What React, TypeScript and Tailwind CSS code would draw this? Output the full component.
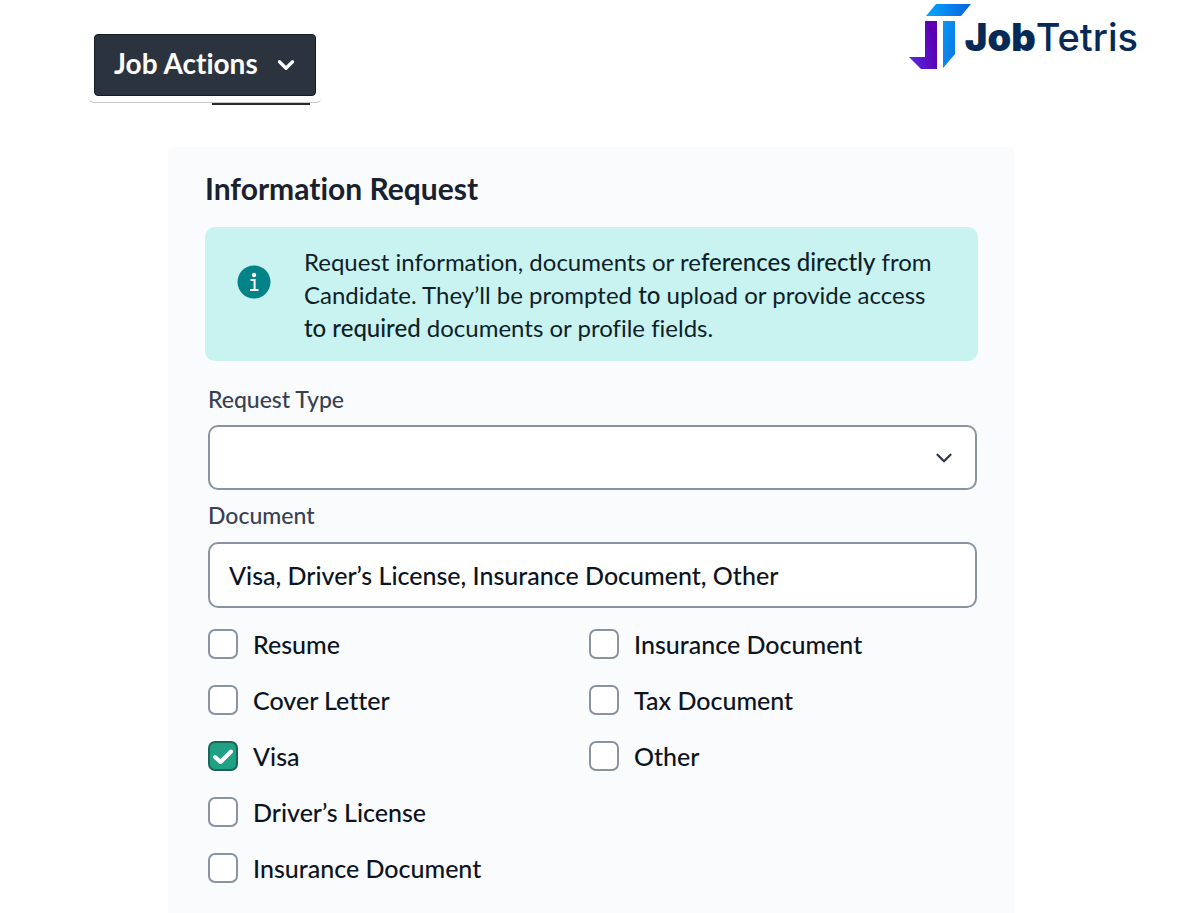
import { useState } from "react";
import { ChevronDown } from "lucide-react";

const leftOptions = [
  { id: "resume", label: "Resume" },
  { id: "cover-letter", label: "Cover Letter" },
  { id: "visa", label: "Visa" },
  { id: "drivers-license", label: "Driver’s License" },
  { id: "insurance", label: "Insurance Document" },
];

const rightOptions = [
  { id: "insurance-2", label: "Insurance Document" },
  { id: "tax", label: "Tax Document" },
  { id: "other", label: "Other" },
];

function Logo() {
  return (
    <a href="#" className="flex items-start" aria-label="JobTetris">
      <svg width="62" height="66" viewBox="0 0 62 66" aria-hidden="true">
        <defs>
          <linearGradient id="top" x1="0" x2="1">
            <stop offset="0" stopColor="#00a8ff" />
            <stop offset="1" stopColor="#0a5fdc" />
          </linearGradient>
          <linearGradient id="stem" x1="0" x2="1" y1="0" y2="1">
            <stop offset="0" stopColor="#0a97f5" />
            <stop offset="1" stopColor="#0a74e4" />
          </linearGradient>
          <linearGradient id="hook" x1="0" x2="1" y1="1" y2="0.6">
            <stop offset="0" stopColor="#5a2be6" />
            <stop offset="1" stopColor="#5a00b0" />
          </linearGradient>
        </defs>
        <path d="M27 0H62L52 12H17Z" fill="url(#top)" />
        <path d="M34 17H46V50L34 64Z" fill="url(#stem)" />
        <path d="M16 17H28V65H12L0 53H16Z" fill="url(#hook)" />
      </svg>
      <span className="mt-3 -ml-[6px] font-['Inter',sans-serif] text-[38px] leading-[42px] font-medium text-[#062a55]">
        <span className="font-black">Job</span>Tetris
      </span>
    </a>
  );
}

function CheckItem({ id, label, checked, onToggle }: any) {
  return (
    <div className="flex h-[30px] items-center gap-[15px]">
      <span className="relative size-[30px] shrink-0">
        <input
          id={id}
          type="checkbox"
          checked={checked}
          onChange={() => onToggle(id)}
          className="block size-[30px] appearance-none rounded-[7px] border-2 border-[#8a93a1] bg-white checked:border-[#1a6558] checked:bg-[#20a085]"
        />
        {checked && (
          <svg
            viewBox="0 0 30 30"
            className="pointer-events-none absolute inset-0 size-[30px]"
            fill="none"
            stroke="white"
            strokeWidth="4"
            strokeLinecap="round"
            strokeLinejoin="round"
          >
            <path d="M7 16L12.5 21L23 10.5" />
          </svg>
        )}
      </span>
      <label htmlFor={id} className="text-[25px] leading-[30px] font-medium text-[#0c1421]">
        {label}
      </label>
    </div>
  );
}

export default function App() {
  const [selected, setSelected] = useState<string[]>(["visa"]);
  const [documents, setDocuments] = useState(
    "Visa, Driver’s License, Insurance Document, Other"
  );

  const toggle = (id: string) => {
    setSelected((prev) =>
      prev.includes(id) ? prev.filter((item) => item !== id) : [...prev, id]
    );
  };

  return (
    <div className="flex min-h-screen flex-col bg-white font-['Lato',sans-serif] [font-variant-ligatures:none]">
      <header className="flex items-start justify-between pt-1 pr-14 pl-[88px]">
        <div className="mt-6">
          <div className="rounded-md border-b border-[#c9c9c9] p-[6px]">
            <button className="flex h-[62px] w-[222px] items-center gap-[15px] rounded-[4px] border border-[#151b24] bg-[#2b333e] pb-1 pl-[19px] text-[28px] font-bold text-white">
              Job Actions
              <ChevronDown size={26} strokeWidth={3} className="mt-1" />
            </button>
          </div>
          <div className="mr-3 ml-[124px] h-[2px] bg-[#2a2a2a]" />
        </div>
        <Logo />
      </header>

      <main className="mt-[42px] mr-[179px] ml-[168px] flex-1 rounded-t-md bg-[#fafbfd] px-[37px] pt-[23px] pb-[30px]">
        <h1 className="text-[30px] leading-9 font-bold text-[#1a212e]">
          Information Request
        </h1>

        <div className="mt-[21px] flex gap-[33px] rounded-[10px] bg-[#c8f3f0] px-8 pt-[18px] pb-[17px]">
          <svg viewBox="0 0 34 34" className="mt-5 size-[34px] shrink-0" aria-hidden="true">
            <circle cx="17" cy="17" r="16.5" fill="#038387" />
            <circle cx="17" cy="10" r="2.2" fill="white" />
            <path
              d="M13.5 15H17.6V24.5M13 25H21.5"
              fill="none"
              stroke="white"
              strokeWidth="2"
            />
          </svg>
          <p className="text-[24px] leading-[33px] text-[#0f1f2a]">
            Request information, documents or re
            <span className="font-medium">ferences directly</span> from
            <br />
            Candidate. They’ll be prompted <span className="font-medium">to</span> upload or
            provide access
            <br />
            <span className="font-medium">to required</span> documents or profile fields.
          </p>
        </div>

        <form className="mt-[23px] pr-[1px] pl-[3px]">
          <label
            htmlFor="request-type"
            className="block text-[23px] leading-[30px] font-medium text-[#364053]"
          >
            Request Type
          </label>
          <div className="relative mt-[11px]">
            <select
              id="request-type"
              defaultValue=""
              className="block h-[65px] w-full appearance-none rounded-[10px] border-2 border-[#8a93a1] bg-white px-5 text-[25px] font-medium text-[#0c1421]"
            >
              <option value=""></option>
              <option value="document">Document</option>
              <option value="reference">Reference</option>
            </select>
            <ChevronDown
              size={26}
              strokeWidth={2}
              className="pointer-events-none absolute top-5 right-5 text-[#2b3448]"
            />
          </div>

          <label
            htmlFor="document"
            className="mt-[10px] block text-[23px] leading-[30px] font-medium text-[#364053]"
          >
            Document
          </label>
          <input
            id="document"
            type="text"
            value={documents}
            onChange={(e) => setDocuments(e.target.value)}
            className="mt-[12px] block h-[66px] w-full rounded-[10px] border-2 border-[#8a93a1] bg-white px-[19px] text-[25px] font-medium text-[#0c1421]"
          />

          <div className="mt-[21px] grid grid-cols-[381px_1fr]">
            <div className="flex flex-col gap-[26px]">
              {leftOptions.map((option) => (
                <CheckItem
                  key={option.id}
                  {...option}
                  checked={selected.includes(option.id)}
                  onToggle={toggle}
                />
              ))}
            </div>
            <div className="flex flex-col gap-[26px]">
              {rightOptions.map((option) => (
                <CheckItem
                  key={option.id}
                  {...option}
                  checked={selected.includes(option.id)}
                  onToggle={toggle}
                />
              ))}
            </div>
          </div>
        </form>
      </main>
    </div>
  );
}
